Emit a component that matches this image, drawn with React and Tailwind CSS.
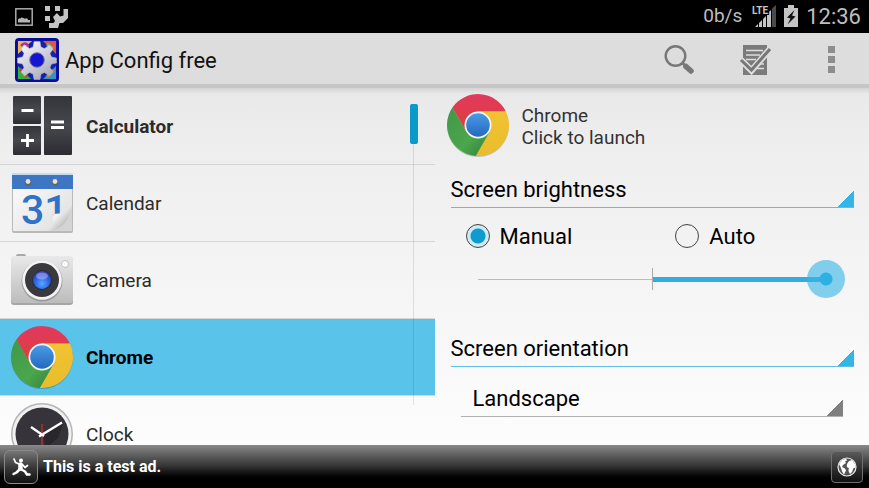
import React, { useId, useState } from 'react';

function ChromeIcon() {
  const id = useId();
  return (
    <svg viewBox="-32 -32 64 64" className="h-16 w-16 shrink-0" aria-hidden="true">
      <defs>
        <linearGradient id={`${id}r`} x1="0" y1="0" x2="0" y2="1">
          <stop offset="0" stopColor="#e2395f" />
          <stop offset="1" stopColor="#dc3f38" />
        </linearGradient>
        <linearGradient id={`${id}y`} x1="0" y1="0" x2="0" y2="1">
          <stop offset="0" stopColor="#f2c233" />
          <stop offset="1" stopColor="#e8bd2a" />
        </linearGradient>
        <linearGradient id={`${id}g`} x1="0" y1="0" x2="1" y2="1">
          <stop offset="0" stopColor="#3f9848" />
          <stop offset="0.6" stopColor="#4ca64c" />
          <stop offset="1" stopColor="#2f7f36" />
        </linearGradient>
        <linearGradient id={`${id}b`} x1="0" y1="0" x2="0" y2="1">
          <stop offset="0" stopColor="#4a9be6" />
          <stop offset="1" stopColor="#2469bd" />
        </linearGradient>
      </defs>
      <circle r="31" cy="1" fill="#000" opacity="0.2" />
      <path d="M27.9 -13.5 L0 -13.5 L-11.7 6.8 L-25.6 -17.4 A31 31 0 0 1 27.9 -13.5Z" fill={`url(#${id}r)`} />
      <path d="M27.9 -13.5 L0 -13.5 L11.7 6.8 L-2.3 30.9 A31 31 0 0 0 27.9 -13.5Z" fill={`url(#${id}y)`} />
      <path d="M-2.3 30.9 L11.7 6.8 L-11.7 6.8 L-25.6 -17.4 A31 31 0 0 0 -2.3 30.9Z" fill={`url(#${id}g)`} />
      <circle r="13.5" fill="#f6f8fa" />
      <circle r="11.8" fill={`url(#${id}b)`} />
    </svg>
  );
}

function CalculatorIcon() {
  return (
    <svg viewBox="0 0 64 64" className="h-16 w-16 shrink-0" aria-hidden="true">
      <defs>
        <linearGradient id="calcKey" x1="0" y1="0" x2="0" y2="1">
          <stop offset="0" stopColor="#34343b" />
          <stop offset="0.5" stopColor="#47474e" />
          <stop offset="1" stopColor="#2c2c32" />
        </linearGradient>
      </defs>
      <rect x="3" y="2" width="28" height="28" rx="1" fill="url(#calcKey)" />
      <rect x="3" y="32" width="28" height="29" rx="1" fill="url(#calcKey)" />
      <rect x="34" y="2" width="28" height="59" rx="1" fill="url(#calcKey)" />
      <path d="M11.5 16.5h12M11 46.5h13M17.5 40v13M41 28h13M41 33.5h13" stroke="#fff" strokeWidth="2.8" />
    </svg>
  );
}

function CalendarIcon() {
  return (
    <svg viewBox="0 0 64 64" className="h-16 w-16 shrink-0" aria-hidden="true">
      <defs>
        <linearGradient id="calPage" x1="0" y1="0" x2="1" y2="1">
          <stop offset="0" stopColor="#fdfdfd" />
          <stop offset="1" stopColor="#dedede" />
        </linearGradient>
        <linearGradient id="calCurl" x1="0" y1="0" x2="1" y2="1">
          <stop offset="0.1" stopColor="#8d8d8d" />
          <stop offset="0.4" stopColor="#f6f6f6" />
          <stop offset="0.7" stopColor="#c4c4c4" />
        </linearGradient>
      </defs>
      <rect x="2" y="2" width="61" height="60" rx="2" fill="#b9b9b9" />
      <rect x="3" y="3" width="59" height="57" rx="1" fill="url(#calPage)" />
      <rect x="2" y="2" width="61" height="3" rx="1" fill="#c7dcf2" />
      <rect x="2" y="4" width="61" height="14" fill="#3f76c4" />
      <circle cx="18" cy="11.5" r="3.4" fill="#5d6670" />
      <circle cx="18" cy="10.5" r="2.4" fill="#e3e3e3" />
      <circle cx="45" cy="11.5" r="3.4" fill="#5d6670" />
      <circle cx="45" cy="10.5" r="2.4" fill="#e3e3e3" />
      <text x="11" y="53" fontSize="41" fontWeight="500" fill="#2f72c8" fontFamily="Roboto, sans-serif">31</text>
      <path d="M62 33 C60 40 53 43 42 43 C45 52 41 58 36 60 L62 60Z" fill="url(#calCurl)" />
      <path d="M62 35 L62 60 L42 60 C53 57 60 48 62 35Z" fill="#d4d4d4" />
    </svg>
  );
}

function CameraIcon() {
  return (
    <svg viewBox="0 0 64 64" className="h-16 w-16 shrink-0" aria-hidden="true">
      <defs>
        <linearGradient id="camBody" x1="0" y1="0" x2="0" y2="1">
          <stop offset="0" stopColor="#e9e9e9" />
          <stop offset="1" stopColor="#bcbcbc" />
        </linearGradient>
        <radialGradient id="camLens" cx="0.5" cy="0.7" r="0.6">
          <stop offset="0" stopColor="#57a8ff" />
          <stop offset="0.6" stopColor="#2f6bea" />
          <stop offset="1" stopColor="#2a44b8" />
        </radialGradient>
      </defs>
      <rect x="6" y="6" width="10" height="5" rx="2" fill="#a9a9a9" />
      <rect x="1" y="9" width="62" height="48" rx="3" fill="#a6a6a6" />
      <rect x="1" y="8" width="62" height="47" rx="3" fill="url(#camBody)" />
      <circle cx="32" cy="33" r="20.5" fill="#9a9a9a" />
      <circle cx="32" cy="32" r="19.8" fill="#f3f3f3" />
      <circle cx="32" cy="32" r="17" fill="#3a3a3e" />
      <circle cx="32" cy="32" r="10" fill="#2b2b38" />
      <circle cx="32" cy="32" r="9" fill="url(#camLens)" />
      <ellipse cx="32" cy="28" rx="6" ry="3.5" fill="#b9b0f5" opacity="0.55" />
      <circle cx="55" cy="16" r="3.5" fill="#fff" stroke="#bdbdbd" />
    </svg>
  );
}

function ClockIcon() {
  return (
    <svg viewBox="0 0 64 64" className="h-16 w-16 shrink-0" aria-hidden="true">
      <circle cx="32" cy="32" r="31" fill="#b5b5b5" />
      <circle cx="32" cy="32" r="29.5" fill="#f1f1f1" />
      <circle cx="32" cy="32" r="26.5" fill="#37333a" />
      <path d="M33 33 L53 22 L48 36 L36 46Z" fill="#29262c" />
      <path d="M32 22v36" stroke="#c8322f" strokeWidth="1.3" />
      <path d="M21 25 L34 34 M29 34.5 L52 20.500" stroke="#fff" strokeWidth="2.3" />
    </svg>
  );
}

function AppLogo() {
  return (
    <svg viewBox="0 0 44 44" className="h-11 w-11" aria-hidden="true">
      <defs>
        <linearGradient id="gear" gradientUnits="userSpaceOnUse" x1="10" y1="6" x2="34" y2="40">
          <stop offset="0" stopColor="#f1f1fb" />
          <stop offset="1" stopColor="#a9a9b6" />
        </linearGradient>
      </defs>
      <rect width="44" height="44" rx="4" fill="#0b0b98" />
      <rect x="2.5" y="2.5" width="39" height="39" fill="#1620ae" />
      <path d="M3 3h14L3 16z" fill="#ecb65a" />
      <path d="M28 3h13v13z" fill="#e2563f" />
      <path d="M3 28v13h13z" fill="#35b13a" />
      <path d="M41 28v13H28z" fill="#2e96c4" />
      <path d="M6 8c4-5 9-1 6 3" stroke="#a034a8" strokeWidth="2.5" fill="none" />
      <path d="M32 6l6 5" stroke="#58c47b" strokeWidth="3" />
      <path d="M5 31l7 8" stroke="#d83c2c" strokeWidth="3" />
      <path d="M32 39l7-7" stroke="#d47b32" strokeWidth="3" />
      <path
        d="M19 3.500h6l1 5.500 3.500 1.500 5-3.500 3.500 4-3 4.500 1.500 3.500 5 1v5l-5 1-1.500 3.500 3 4.500-3.500 4-5-3.500-3.500 1.500-1 5.500h-6l-1-5.500-3.500-1.500-5 3.500-3.500-4 3-4.500L7.500 26l-5-1v-5l5-1L9 15.500 6 11l3.500-4 5 3.500L18 9z"
        fill="url(#gear)"
        stroke="#b4b4c4"
        strokeWidth="0.5"
      />
      <circle cx="22" cy="22" r="7.3" fill="#1414d2" stroke="#7a7a98" />
    </svg>
  );
}

const apps = [
  { name: 'Calculator', Icon: CalculatorIcon, configured: true },
  { name: 'Calendar', Icon: CalendarIcon },
  { name: 'Camera', Icon: CameraIcon },
  { name: 'Chrome', Icon: ChromeIcon, configured: true },
  { name: 'Clock', Icon: ClockIcon },
];

function StatusBar() {
  return (
    <div className="flex h-[33px] shrink-0 items-center justify-between bg-black pl-[15px] pr-2 text-[#bebebe]">
      <div className="flex items-center gap-3">
        <svg viewBox="0 0 18 18" className="h-[18px] w-[18px]" aria-hidden="true">
          <rect x="0.8" y="0.8" width="16.4" height="16.4" fill="none" stroke="#b5b5b5" strokeWidth="1.4" />
          <path d="M3 14.5v-3c1-1.500 2-.5 3-1.500 1.500-1.500 3 1.500 4.500.5 1.500-.8 2.500.5 2.500 1.500h2v2.500z" fill="#b5b5b5" />
        </svg>
        <svg viewBox="0 0 24 24" className="h-6 w-6" fill="#c4c4c4" aria-hidden="true">
          <path d="M0 1h5v5H0zM10 1h5v5h-5zM0 11h5v5H0z" />
          <path d="M18.500 4H23v9l-5 5h-3.500l-1.500 5H4v-5h4.500l1.500-2L8 12l4-4 3 3.500 3.500-1z" />
        </svg>
      </div>
      <div className="flex items-center">
        <span className="text-[19px]">0b/s</span>
        <svg viewBox="0 0 24 24" className="ml-2.5 h-6 w-6" aria-hidden="true">
          <path d="M20 3.500L24 0v22h-4z" fill="#4b4b4b" />
          <path d="M15 9l4-4v17h-4zM11 14l3-3v11h-3zM7 18l3-3v7H7zM3 22l3-3v3z" fill="#c4c4c4" />
          <text x="0" y="9" fontSize="10" fontWeight="700" fill="#c4c4c4" stroke="#000" strokeWidth="2" paintOrder="stroke" fontFamily="Roboto, sans-serif">LTE</text>
        </svg>
        <svg viewBox="0 0 14 24" className="ml-2 h-6 w-[14px]" aria-hidden="true">
          <path d="M4 0h6v3h4v19H0V3h4z" fill="#c4c4c4" />
          <path d="M10.500 5L3 12.500l3.500 1L3.500 19.500 11.500 11.500 8 10.500z" fill="#111" />
        </svg>
        <time className="ml-2 text-[22px]">12:36</time>
      </div>
    </div>
  );
}

function ActionBar() {
  return (
    <header className="flex h-[55px] shrink-0 items-center border-b-4 border-[#c6c6c6] bg-[#dddddd] pl-[15px] pt-[3px]">
      <AppLogo />
      <h1 className="ml-1.5 flex-1 text-[22px] text-[#111]">App Config free</h1>
      <button aria-label="Search" className="flex w-[76px] justify-center">
        <svg viewBox="0 0 32 32" className="h-8 w-8" fill="none" stroke="#777" aria-hidden="true">
          <circle cx="12.5" cy="12" r="9.8" strokeWidth="2.4" />
          <path d="M19.500 19l3 3" strokeWidth="3" />
          <path d="M23 22.500l5 4.500" strokeWidth="5.5" strokeLinecap="round" />
        </svg>
      </button>
      <button aria-label="Select apps" className="flex w-[76px] justify-center">
        <svg viewBox="0 0 32 32" className="h-8 w-8" aria-hidden="true">
          <path d="M4 1h24v30H4z" fill="#7b7b7b" />
          <path d="M7 6.500h17M7 11h14M7 15.500h10M16 20h9M18 24.500h7" stroke="#ddd" strokeWidth="1.6" />
          <path d="M2 16l10.500 10.500L31 5" stroke="#ddd" strokeWidth="6.5" fill="none" />
          <path d="M2 16l10.500 10L31 5" stroke="#777" strokeWidth="3" fill="none" />
        </svg>
      </button>
      <button aria-label="More options" className="flex w-[76px] justify-center">
        <svg viewBox="0 0 8 28" className="h-7 w-2" fill="#8d8d8d" aria-hidden="true">
          <path d="M1 0h7v7H1zM1 10h7v7H1zM1 20h7v7H1z" />
        </svg>
      </button>
    </header>
  );
}

function AppList({ selected, onSelect }) {
  return (
    <nav aria-label="Apps" className="relative w-1/2 overflow-hidden">
      <ul>
        {apps.map(({ name, Icon, configured }) => {
          const isSelected = selected === name;
          return (
            <li key={name} className="border-b border-[#d6d6d6]">
              <button
                onClick={() => onSelect(name)}
                className={`flex h-[76px] w-full items-center gap-3 pl-2.5 text-left text-[19px] ${isSelected ? 'bg-[#5ac3ea] text-black' : 'text-[#2b2b2b]'} ${configured ? 'font-bold' : ''}`}
              >
                <Icon />
                <span className="pt-0.5">{name}</span>
              </button>
            </li>
          );
        })}
      </ul>

      {/* Fast scroller */}
      <div className="pointer-events-none absolute bottom-10 right-[17px] top-4 flex w-2 flex-col items-center">
        <div className="h-10 w-2 rounded-xs bg-[#0a99cb]" />
        <div className="w-px flex-1 bg-black/10" />
      </div>
    </nav>
  );
}

function ConfigPanel({ app }) {
  const [mode, setMode] = useState('Manual');
  const [level, setLevel] = useState(100);

  return (
    <main className="w-1/2 overflow-hidden pl-4 pr-[15px] pt-[5px] text-[22px] text-black">
      <button className="-ml-[5px] flex items-center gap-3 text-left text-[19px] leading-[22px] text-[#333]">
        <ChromeIcon />
        <span className="pt-[3px]">
          {app}
          <br />
          Click to launch
        </span>
      </button>

      <select
        aria-label="Brightness setting"
        className="mt-[15px] block h-9 w-full appearance-none border-b border-b-[#62bde6] bg-[linear-gradient(135deg,transparent_50%,#33b5e5_50%)] bg-[length:16px_16px] bg-[position:right_bottom] bg-no-repeat"
      >
        <option>Screen brightness</option>
      </select>

      <div role="radiogroup" aria-label="Screen brightness" className="mt-3 flex h-8 items-center pl-[15px]">
        {['Manual', 'Auto'].map(option => (
          <label key={option} className="flex w-[54%] shrink-0 items-center gap-2.5">
            <input
              type="radio"
              name="brightness"
              checked={mode === option}
              onChange={() => setMode(option)}
              className="h-6 w-6 appearance-none rounded-full border border-[#444] checked:bg-[radial-gradient(circle,#0d9bd0_7px,#cdeaf6_8px)]"
            />
            {option}
          </label>
        ))}
      </div>

      <div className="relative ml-2 mr-[9px] mt-2 h-[38px]">
        <div className="absolute inset-x-[19px] inset-y-0 flex items-center">
          <div className="h-px w-1/2 bg-[#bbb]" />
          <div className="h-[22px] w-px bg-[#aaa]" />
          <div className="flex-1">
            <div className="h-[5px] bg-[#33ade0]" style={{ width: `${level}%` }} />
          </div>
        </div>
        <input
          type="range"
          aria-label="Brightness level"
          min="-100"
          max="100"
          value={level}
          onChange={e => setLevel(Number(e.target.value))}
          className="absolute inset-0 h-full w-full appearance-none bg-transparent [&::-webkit-slider-thumb]:h-[38px] [&::-webkit-slider-thumb]:w-[38px] [&::-webkit-slider-thumb]:appearance-none [&::-webkit-slider-thumb]:rounded-full [&::-webkit-slider-thumb]:bg-[radial-gradient(circle,#2fb0e2_6px,#33b5e599_7px)]"
        />
      </div>

      <select
        aria-label="Orientation setting"
        className="mt-[33px] block h-9 w-full appearance-none border-b border-b-[#62bde6] bg-[linear-gradient(135deg,transparent_50%,#33b5e5_50%)] bg-[length:16px_16px] bg-[position:right_bottom] bg-no-repeat"
      >
        <option>Screen orientation</option>
      </select>

      <div className="mt-3.5 pl-2.5 pr-[11px]">
        <select
          aria-label="Screen orientation"
          className="block h-9 w-full appearance-none border-b border-b-[#b0b0b0] bg-[linear-gradient(135deg,transparent_50%,#808080_50%)] bg-[length:16px_16px] bg-[position:right_bottom] bg-no-repeat pl-3"
        >
          <option>Landscape</option>
          <option>Portrait</option>
        </select>
      </div>
    </main>
  );
}

function AdBanner() {
  return (
    <footer className="flex h-[43px] shrink-0 items-center bg-linear-to-b from-[#8a8a8a] via-[#333] to-black to-85% pl-1 pr-1.5">
      <button aria-label="Open ad" className="flex h-[34px] w-[34px] items-center justify-center rounded-md border border-[#8a8a8a] bg-linear-to-b from-[#777] via-[#3a3a3a] via-50% to-[#111]">
        <svg viewBox="0 0 20 20" className="h-5 w-5" fill="none" stroke="#fff" strokeLinecap="round" strokeLinejoin="round" aria-hidden="true">
          <circle cx="10" cy="3.5" r="2" fill="#fff" stroke="none" />
          <path d="M9.500 7.500v4" strokeWidth="4.5" />
          <path d="M8 7L4.500 5.500 3 2M11.500 7.500l2.500 3 2.500-2" strokeWidth="1.8" />
          <path d="M8.500 12.500l-3 3L2.500 17M10.500 12.500l3.500 2 2 3h2.500" strokeWidth="2.5" />
        </svg>
      </button>
      <p className="ml-[5px] flex-1 text-base font-bold text-white">This is a test ad.</p>
      <button aria-label="Open in browser" className="flex h-8 w-8 items-center justify-center rounded-sm border border-[#707070] bg-linear-to-b from-[#5a5a5a] via-[#333] to-[#111]">
        <svg viewBox="0 0 20 20" className="h-5 w-5" aria-hidden="true">
          <circle cx="10" cy="10" r="9" fill="#555" stroke="#e8e8e8" strokeWidth="1.2" />
          <path d="M2 7l3-4 4-1.500 1 2-2 1 1 1.500-3 2-1 2 3 1.500 1 2-2 4-2-3-1-3.500zM10 7l2-3 3-1 3 4 .5 4-2 0-1.500 4-2 2-1.500-3 .3-3-2-1z" fill="#fff" />
        </svg>
      </button>
    </footer>
  );
}

export default function App() {
  const [selected, setSelected] = useState('Chrome');

  return (
    <div className="flex h-screen flex-col overflow-hidden bg-white font-[Roboto,sans-serif]">
      <StatusBar />
      <ActionBar />
      <div className="flex min-h-0 flex-1 bg-[linear-gradient(to_bottom,#d4d4d4,#e9e9e9_6px,#eeeeee_60px,#fdfdfd)]">
        <AppList selected={selected} onSelect={setSelected} />
        <ConfigPanel app={selected} />
      </div>
      <AdBanner />
    </div>
  );
}
